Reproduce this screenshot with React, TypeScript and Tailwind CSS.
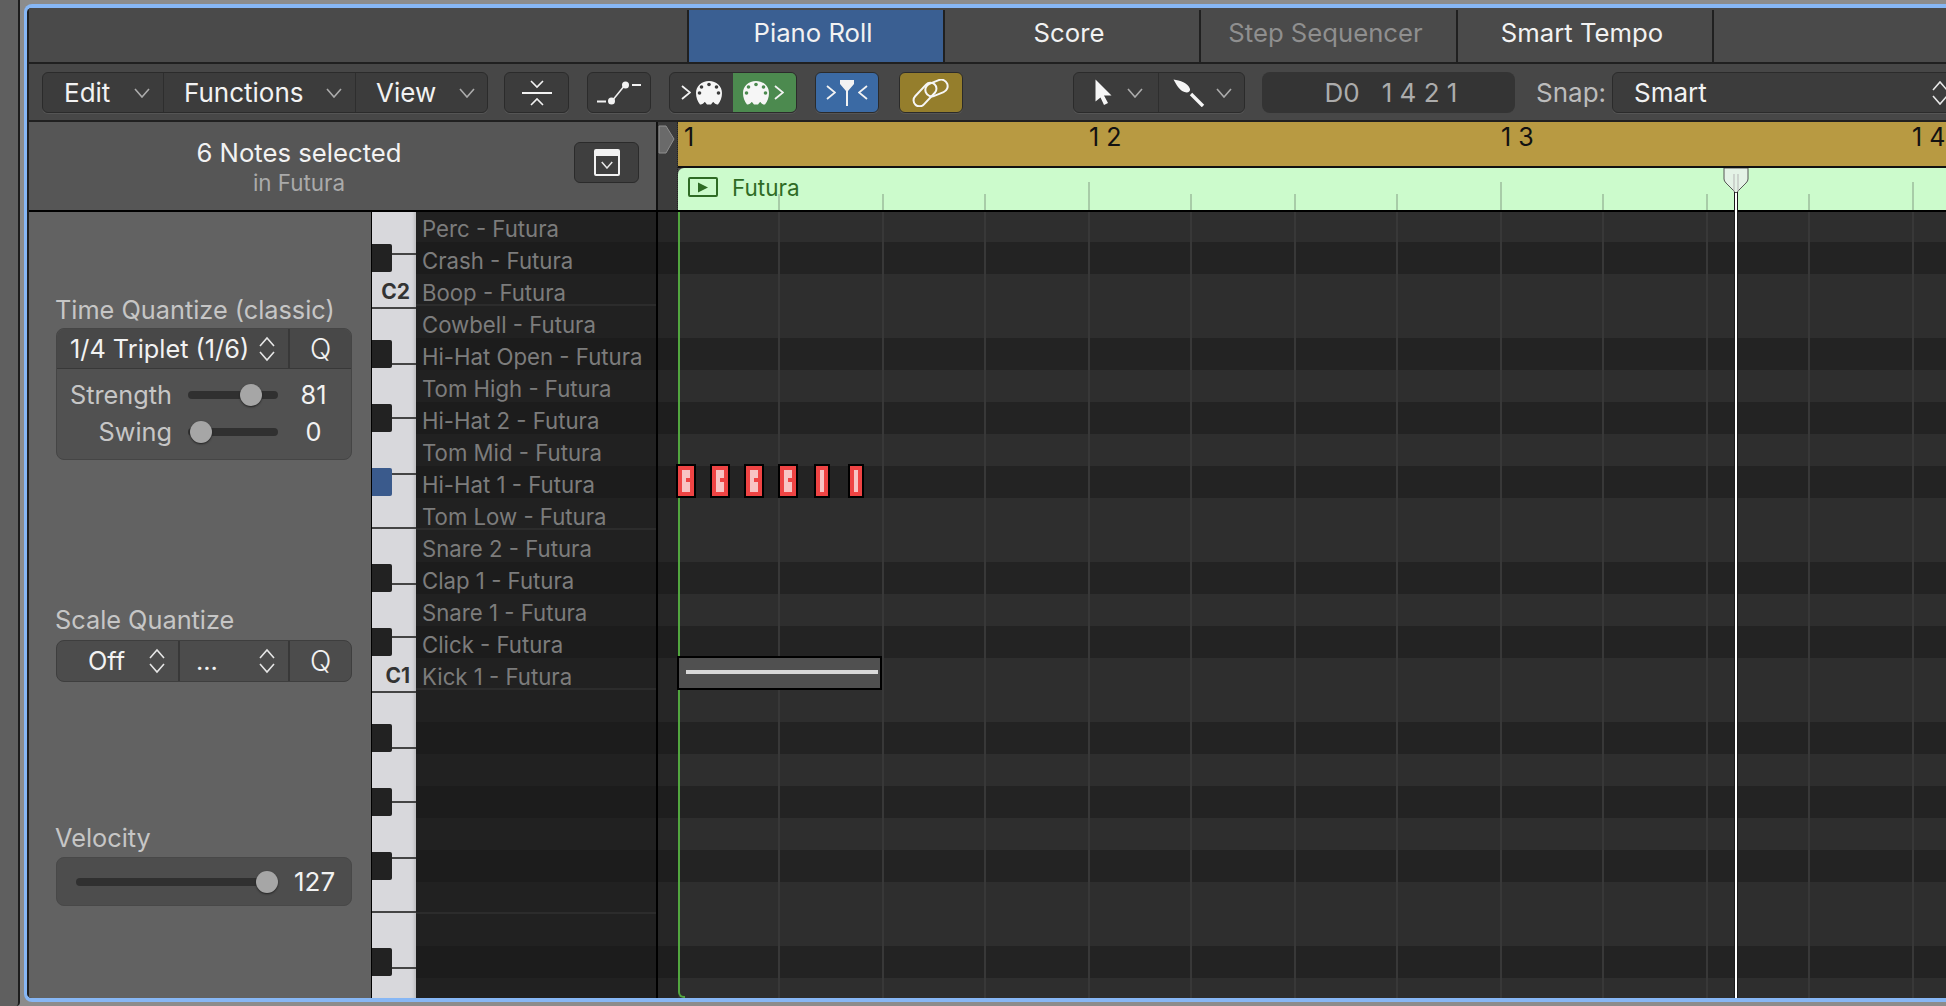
import type { ReactNode } from 'react';

// bar lines of the piano roll, as page x
const ticks = [779, 883, 985, 1089, 1191, 1295, 1397, 1501, 1603, 1707, 1809, 1913];
const majorTicks = [1089, 1501, 1913];

const blackKeys = [244, 340, 404, 468, 564, 628, 724, 788, 852, 948];
const keyLines = [253, 307, 363, 417, 473, 527, 583, 636, 691, 747, 801, 857, 911, 967];
const darkRows = [1, 4, 6, 8, 11, 13, 16, 18, 20, 23];
const octaveRows = [2, 9, 14, 21];

const labels = [
    'Perc - Futura',
    'Crash - Futura',
    'Boop - Futura',
    'Cowbell - Futura',
    'Hi-Hat Open - Futura',
    'Tom High - Futura',
    'Hi-Hat 2 - Futura',
    'Tom Mid - Futura',
    'Hi-Hat 1 - Futura',
    'Tom Low - Futura',
    'Snare 2 - Futura',
    'Clap 1 - Futura',
    'Snare 1 - Futura',
    'Click - Futura',
    'Kick 1 - Futura',
    '', '', '', '', '', '', '', '', '', '',
];

const notes = [
    { x: 676, w: 20 },
    { x: 710, w: 20 },
    { x: 744, w: 20 },
    { x: 778, w: 20 },
    { x: 814, w: 16, thin: true },
    { x: 848, w: 16, thin: true },
];

function ChevronDown({ className = '' }: { className?: string }) {
    return (
        <svg width="16" height="10" viewBox="0 0 16 10" className={className}>
            <polyline points="1,1 8,9 15,1" fill="none" stroke="#ababab" strokeWidth="1.6" />
        </svg>
    );
}

function Stepper({ className = '' }: { className?: string }) {
    return (
        <svg width="16" height="26" viewBox="0 0 16 26" className={className}>
            <polyline points="1,10 8,2 15,10" fill="none" stroke="#e6e6e6" strokeWidth="1.6" />
            <polyline points="1,16 8,24 15,16" fill="none" stroke="#e6e6e6" strokeWidth="1.6" />
        </svg>
    );
}

function Midi({ holes }: { holes: string }) {
    return (
        <svg width="26" height="24" viewBox="0 0 26 24">
            <path
                d="M13 0C20.500 0 26 5.300 26 12C26 16.500 24.500 20.500 22 23.500C20 23.800 18.500 22.500 17.500 21C16.500 21 15.800 22.500 15 23.500H11C10.200 22.500 9.500 21 8.500 21C7.500 22.500 6 23.800 4 23.500C1.500 20.500 0 16.500 0 12C0 5.300 5.500 0 13 0Z"
                fill="#f6f6f6"
            />
            {[[13, 3.500], [5.500, 6], [20.500, 6], [3.500, 12], [22.500, 12]].map(([cx, cy]) => (
                <circle key={`${cx}-${cy}`} cx={cx} cy={cy} r="1.800" fill={holes} />
            ))}
        </svg>
    );
}

function Arrow({ dir }: { dir: 'left' | 'right' }) {
    return (
        <svg width="10" height="15" viewBox="0 0 10 15">
            <polyline
                points={dir === 'right' ? '1,1 9,7.500 1,14' : '9,1 1,7.500 9,14'}
                fill="none"
                stroke="#f2f2f2"
                strokeWidth="1.800"
            />
        </svg>
    );
}

function Tab({ children, className = '' }: { children: ReactNode; className?: string }) {
    return (
        <div className={`h-full flex items-center justify-center pb-[5px] pr-[6px] border-r-2 border-[#202020] text-[25.700px] ${className}`}>
            {children}
        </div>
    );
}

function ToolButton({ children, className = '' }: { children: ReactNode; className?: string }) {
    return (
        <div className={`h-[41px] flex items-center justify-center rounded-md border border-[#2b2b2b] shadow-[0_1px_0_#555] ${className}`}>
            {children}
        </div>
    );
}

function MenuSegment({ label, className }: { label: string; className: string }) {
    return (
        <div className={`h-full flex items-center justify-between border-r border-[#2e2e2e] last:border-r-0 ${className}`}>
            <span>{label}</span>
            <ChevronDown />
        </div>
    );
}

function Slider({ knob, className = '' }: { knob: string; className?: string }) {
    return (
        <div className={`relative h-[8px] rounded-full bg-[#303030] ${className}`}>
            <div className={`absolute top-[-7px] w-[22px] h-[22px] rounded-full bg-[#a6a6a6] shadow-[0_1px_2px_#222] ${knob}`} />
        </div>
    );
}

export default function App() {
    return (
        <div className="w-[1946px] h-[1006px] overflow-hidden flex bg-[#8c8c8c] font-[Inter,sans-serif] text-[#f2f2f2]">
            {/* window behind */}
            <div className="w-[20px] h-full bg-[#5f5f5f] border-r-2 border-[#1c1c1c] rounded-br-sm" />
            <div className="w-[1926px] pl-[4px] pt-[4px]">
                <div className="w-[1930px] h-[998px] border-l-[3px] border-y-[4px] border-[#87b7f5] rounded-l-lg bg-[#202020] pl-[2px] overflow-hidden">
                    <div className="h-full flex flex-col bg-[#4a4a4a]">
                        {/* tabs */}
                        <div className="h-[56px] pt-[2px] flex shrink-0 border-b-2 border-[#202020] bg-[#4a4a4a]">
                            <div className="w-[660px] h-full border-r-2 border-[#202020]" />
                            <Tab className="w-[256px] bg-[#3a5f92]">Piano Roll</Tab>
                            <Tab className="w-[256px]">Score</Tab>
                            <Tab className="w-[257px] text-[#8f8f8f]">Step Sequencer</Tab>
                            <Tab className="w-[256px]">Smart Tempo</Tab>
                        </div>

                        {/* toolbar */}
                        <div className="h-[58px] pt-[8px] pl-[13px] flex shrink-0 text-[26px] border-b-2 border-[#202020] bg-[#474747]">
                            <ToolButton className="w-[446px] bg-[#3c3c3c] !justify-start">
                                <MenuSegment label="Edit" className="w-[121px] pl-[21px] pr-[13px]" />
                                <MenuSegment label="Functions" className="w-[192px] pl-[20px] pr-[13px]" />
                                <MenuSegment label="View" className="w-[131px] pl-[20px] pr-[12px]" />
                            </ToolButton>
                            <ToolButton className="w-[65px] ml-[16px] bg-[#3c3c3c]">
                                <svg width="32" height="26" viewBox="0 0 32 26" fill="none" stroke="#f2f2f2" strokeWidth="1.600">
                                    <polyline points="10,1 16,7 22,1" />
                                    <line x1="1" y1="13" x2="31" y2="13" strokeWidth="2" />
                                    <polyline points="10,25 16,19 22,25" />
                                </svg>
                            </ToolButton>
                            <ToolButton className="w-[64px] ml-[18px] bg-[#3c3c3c]">
                                <svg width="46" height="24" viewBox="0 0 46 24" fill="#f2f2f2">
                                    <rect x="1" y="19.500" width="9" height="2" />
                                    <circle cx="15.500" cy="20" r="3.500" />
                                    <line x1="16" y1="20" x2="29" y2="4" stroke="#f2f2f2" strokeWidth="1.600" />
                                    <circle cx="29.500" cy="4" r="3.500" />
                                    <rect x="36" y="3" width="9" height="2" />
                                </svg>
                            </ToolButton>
                            <ToolButton className="w-[128px] ml-[18px] overflow-hidden bg-[#3c3c3c]">
                                <div className="w-[63px] h-full flex items-center justify-end gap-[5px] pr-[11px]">
                                    <Arrow dir="right" />
                                    <Midi holes="#3c3c3c" />
                                </div>
                                <div className="w-[63px] h-full flex items-center gap-[5px] pl-[10px] bg-[#4c8a4f]">
                                    <Midi holes="#4c8a4f" />
                                    <Arrow dir="right" />
                                </div>
                            </ToolButton>
                            <ToolButton className="w-[64px] ml-[18px] gap-[3px] bg-[#3b6aa4]">
                                <Arrow dir="right" />
                                <svg width="16" height="26" viewBox="0 0 16 26" fill="#f2f2f2">
                                    <path d="M1 0H15V4L9 11V26H7V11L1 4Z" />
                                </svg>
                                <Arrow dir="left" />
                            </ToolButton>
                            <ToolButton className="w-[64px] ml-[20px] bg-[#957e2c]">
                                <svg width="38" height="28" viewBox="0 0 38 28" fill="none" stroke="#f6f6f6" strokeWidth="2">
                                    <rect x="-1" y="9.500" width="28" height="12" rx="6" transform="rotate(-47 13 15.500)" />
                                    <rect x="13" y="2.500" width="23" height="13" rx="6.500" transform="rotate(-22 24.500 9)" />
                                </svg>
                            </ToolButton>
                            <ToolButton className="w-[172px] ml-[110px] bg-[#3c3c3c] overflow-hidden">
                                <div className="w-[86px] h-full flex items-center justify-between pl-[21px] pr-[15px] border-r border-[#2e2e2e]">
                                    <svg width="17" height="27" viewBox="0 0 17 27" fill="#f6f6f6">
                                        <path d="M0.500 0.500L16.500 16.500H9L13 24L9 26L5.500 18.500L0.500 22.500Z" />
                                    </svg>
                                    <ChevronDown />
                                </div>
                                <div className="w-[86px] h-full flex items-center justify-between pl-[14px] pr-[12px]">
                                    <svg width="32" height="28" viewBox="0 0 32 28" fill="#f6f6f6">
                                        <path d="M0.500 0.500C7 1.500 15 3.500 17 10C17.500 13 14.500 14 11.500 13C6.500 11.500 3.500 6 0.500 0.500Z" />
                                        <line x1="18" y1="15" x2="30" y2="27" stroke="#f6f6f6" strokeWidth="3.400" />
                                    </svg>
                                    <ChevronDown />
                                </div>
                            </ToolButton>
                            <div className="w-[253px] h-[41px] ml-[17px] pl-[5px] flex items-center justify-center rounded-lg bg-[#343434] text-[#acacac] whitespace-pre">
                                D0{'   '}1 4 2 1
                            </div>
                            <span className="w-[66px] ml-[21px] h-[41px] flex items-center text-[#bcbcbc]">Snap:</span>
                            <ToolButton className="w-[340px] ml-[10px] pl-[21px] pr-[3px] !justify-between bg-[#3c3c3c]">
                                <span>Smart</span>
                                <Stepper />
                            </ToolButton>
                        </div>

                        {/* editor */}
                        <div className="relative flex-1 flex flex-col min-h-0">
                            <div className="h-[90px] flex shrink-0 border-b-2 border-black">
                                <div className="w-[627px] flex items-start bg-[#565656]">
                                    <div className="w-[540px] pt-[18px] flex flex-col items-center">
                                        <span className="text-[25.700px] leading-[26px]">6 Notes selected</span>
                                        <span className="mt-[4px] text-[22.400px] leading-[26px] text-[#aaaaaa]">in Futura</span>
                                    </div>
                                    <ToolButton className="w-[65px] mt-[20px] ml-[5px] bg-[#3f3f3f]">
                                        <div className="w-[26px] h-[27px] flex items-center justify-center border-2 border-t-[7px] border-[#f2f2f2] rounded-[2px]">
                                            <svg width="12" height="8" viewBox="0 0 16 10">
                                                <polyline points="1,1 8,9 15,1" fill="none" stroke="#e8e8e8" strokeWidth="2" />
                                            </svg>
                                        </div>
                                    </ToolButton>
                                </div>
                                <div className="w-[2px] bg-[#111]" />
                                <div className="w-[20px] pt-[3px] bg-[#3c3c3c] border-r border-dotted border-[#222]">
                                    <svg width="17" height="29" viewBox="0 0 17 29">
                                        <path d="M1 1H8L16 14L8 28H1Z" fill="#6a6a6a" stroke="#8f8f8f" />
                                    </svg>
                                </div>
                                <div className="flex-1 flex flex-col">
                                    <div className="h-[46px] flex border-b-2 border-[#111] bg-[#b89a42] text-[25px] leading-[30px] text-[#111] whitespace-pre">
                                        <span className="w-[411px] pl-[6px]">1</span>
                                        <span className="w-[412px]">1 2</span>
                                        <span className="w-[411px]">1 3</span>
                                        <span>1 4</span>
                                    </div>
                                    <div className="relative flex-1 flex items-start pt-[9px] pl-[10px] rounded-tl-md bg-[#ccfbcc] text-[22.500px] leading-[21px] text-[#2f6b25]">
                                        <div className="w-[30px] h-[20px] flex items-center justify-center rounded-[2px] border-2 border-[#2f6b25]">
                                            <svg width="12" height="11" viewBox="0 0 12 11">
                                                <path d="M1 0.500L11 5.500L1 10.500Z" fill="#2f6b25" />
                                            </svg>
                                        </div>
                                        <span className="ml-[14px]">Futura</span>
                                        {ticks.map((x) => (
                                            <div
                                                key={x}
                                                className="absolute bottom-0 w-[2px] bg-[#a8cca8]"
                                                style={{ left: x - 679, height: majorTicks.includes(x) ? 28 : 16 }}
                                            />
                                        ))}
                                    </div>
                                </div>
                            </div>

                            <div className="flex-1 flex min-h-0">
                                {/* quantize panel */}
                                <div className="w-[343px] shrink-0 pl-[27px] flex flex-col border-r border-black bg-[#626262] text-[25.300px]">
                                    <div className="mt-[86px] -ml-[1px] h-[24px] leading-[24px] text-[#c6c6c6] whitespace-nowrap">Time Quantize (classic)</div>
                                    <div className="w-[296px] h-[132px] mt-[6px] rounded-lg border border-[#454545] bg-[#515151]">
                                        <div className="h-[40px] flex items-center rounded-t-lg border-b border-[#383838] bg-[#484848]">
                                            <div className="w-[233px] h-full flex items-center justify-between pl-[13px] pr-[13px] border-r-2 border-[#383838] whitespace-nowrap">
                                                <span>1/4 Triplet (1/6)</span>
                                                <Stepper />
                                            </div>
                                            <span className="flex-1 text-center text-[28px] font-light">Q</span>
                                        </div>
                                        <div className="h-[36px] mt-[8px] flex items-center">
                                            <span className="w-[115px] text-right text-[#c6c6c6]">Strength</span>
                                            <Slider knob="left-[52px]" className="w-[90px] ml-[16px]" />
                                            <span className="w-[71px] text-center">81</span>
                                        </div>
                                        <div className="h-[36px] mt-[1px] flex items-center">
                                            <span className="w-[115px] text-right text-[#c6c6c6]">Swing</span>
                                            <Slider knob="left-[2px]" className="w-[90px] ml-[16px]" />
                                            <span className="w-[71px] text-center">0</span>
                                        </div>
                                    </div>

                                    <div className="mt-[148px] -ml-[1px] h-[24px] leading-[24px] text-[#c6c6c6]">Scale Quantize</div>
                                    <div className="w-[296px] h-[42px] mt-[8px] flex items-center rounded-lg border border-[#3e3e3e] bg-[#4c4c4c]">
                                        <div className="w-[123px] h-full flex items-center justify-between pl-[31px] pr-[13px] border-r-2 border-[#383838]">
                                            <span>Off</span>
                                            <Stepper />
                                        </div>
                                        <div className="w-[110px] h-full flex items-center justify-between pl-[16px] pr-[13px] border-r-2 border-[#383838]">
                                            <span>...</span>
                                            <Stepper />
                                        </div>
                                        <span className="flex-1 text-center text-[28px] font-light">Q</span>
                                    </div>

                                    <div className="mt-[144px] -ml-[1px] h-[24px] leading-[24px] text-[#c6c6c6]">Velocity</div>
                                    <div className="w-[296px] h-[49px] mt-[7px] flex items-center rounded-lg border border-[#484848] bg-[#4d4d4d]">
                                        <Slider knob="left-[180px]" className="w-[190px] ml-[19px]" />
                                        <span className="ml-[28px] text-[26px]">127</span>
                                    </div>
                                </div>

                                {/* keyboard */}
                                <div className="relative w-[44px] shrink-0 bg-[#d8d8dc] shadow-[inset_-4px_0_3px_-2px_#bdbdc0]">
                                    {keyLines.map((y) => (
                                        <div
                                            key={y}
                                            className="absolute right-0 left-0 h-[2px] bg-[#444]"
                                            style={{ top: y - 212 }}
                                        />
                                    ))}
                                    {blackKeys.map((y) => (
                                        <div
                                            key={y}
                                            className={`absolute left-0 w-[20px] h-[28px] rounded-r-[2px] ${y === 468 ? 'bg-[#3a5a8c]' : 'bg-[#222222]'}`}
                                            style={{ top: y - 212 }}
                                        />
                                    ))}
                                    <span className="absolute top-[68px] right-[6px] text-[21px] leading-[24px] font-bold text-[#333]">C2</span>
                                    <span className="absolute top-[452px] right-[6px] text-[21px] leading-[24px] font-bold text-[#333]">C1</span>
                                </div>

                                {/* rows and grid */}
                                <div className="relative flex-1 min-w-0 overflow-hidden">
                                    <div className="-mt-[2px] flex flex-col">
                                        {labels.map((label, i) => {
                                            const dark = darkRows.includes(i);
                                            return (
                                                <div key={i} className="h-[32px] shrink-0 flex">
                                                    <div
                                                        className={`w-[240px] pl-[6px] pt-[6px] text-[22.200px] leading-[26px] text-[#7c7c7c] ${dark ? 'bg-[#1c1c1c]' : 'bg-[#212121]'} ${octaveRows.includes(i) ? 'border-b-2 border-[#2c2c2c]' : ''}`}
                                                    >
                                                        {label}
                                                    </div>
                                                    <div className="w-[2px] bg-black" />
                                                    <div className={`w-[20px] ${dark ? 'bg-[#1e1e1e]' : 'bg-[#262626]'}`} />
                                                    <div className={`flex-1 ${dark ? 'bg-[#232323]' : 'bg-[#2e2e2e]'}`} />
                                                </div>
                                            );
                                        })}
                                    </div>

                                    {ticks.map((x) => (
                                        <div
                                            key={x}
                                            className="absolute top-0 bottom-0 w-[2px] bg-[#383838]"
                                            style={{ left: x - 417 }}
                                        />
                                    ))}

                                    {/* left locator line */}
                                    <div className="absolute top-0 bottom-0 left-[262px] w-[7px] rounded-bl-md border-l-2 border-b-2 border-[#52a63f]" />

                                    {/* hi-hat notes */}
                                    {notes.map((n) => (
                                        <div
                                            key={n.x}
                                            className="absolute top-[252px] h-[34px] flex items-center justify-center border-2 border-black bg-[#ef4444]"
                                            style={{ left: n.x - 416, width: n.w }}
                                        >
                                            <div className={`relative h-[22px] bg-[#f8c4c4] ${n.thin ? 'w-[4px]' : 'w-[8px]'}`}>
                                                {!n.thin && <div className="absolute top-[8px] right-0 w-[4px] h-[4px] bg-[#ef4444]" />}
                                            </div>
                                        </div>
                                    ))}

                                    {/* kick note */}
                                    <div className="absolute top-[444px] left-[261px] w-[205px] h-[34px] flex items-start pt-[12px] pl-[7px] border-2 border-black bg-[#505050]">
                                        <div className="w-[192px] h-[4px] bg-[#d9d9d9]" />
                                    </div>
                                </div>
                            </div>

                            {/* playhead */}
                            <div className="absolute top-[70px] bottom-0 left-[1706px] w-[2px] bg-white shadow-[0_0_0_1px_#1a1a1a]" />
                            <svg className="absolute top-[46px] left-[1694px]" width="26" height="26" viewBox="0 0 26 26">
                                <path d="M1 0V11Q1 13 3 15L13 25L23 15Q25 13 25 11V0Z" fill="#e4f2e6" stroke="#555" />
                                <line x1="11" y1="6" x2="11" y2="24" stroke="#b5b5b5" />
                                <line x1="15" y1="6" x2="15" y2="24" stroke="#b5b5b5" />
                            </svg>
                        </div>
                    </div>
                </div>
            </div>
        </div>
    );
}
